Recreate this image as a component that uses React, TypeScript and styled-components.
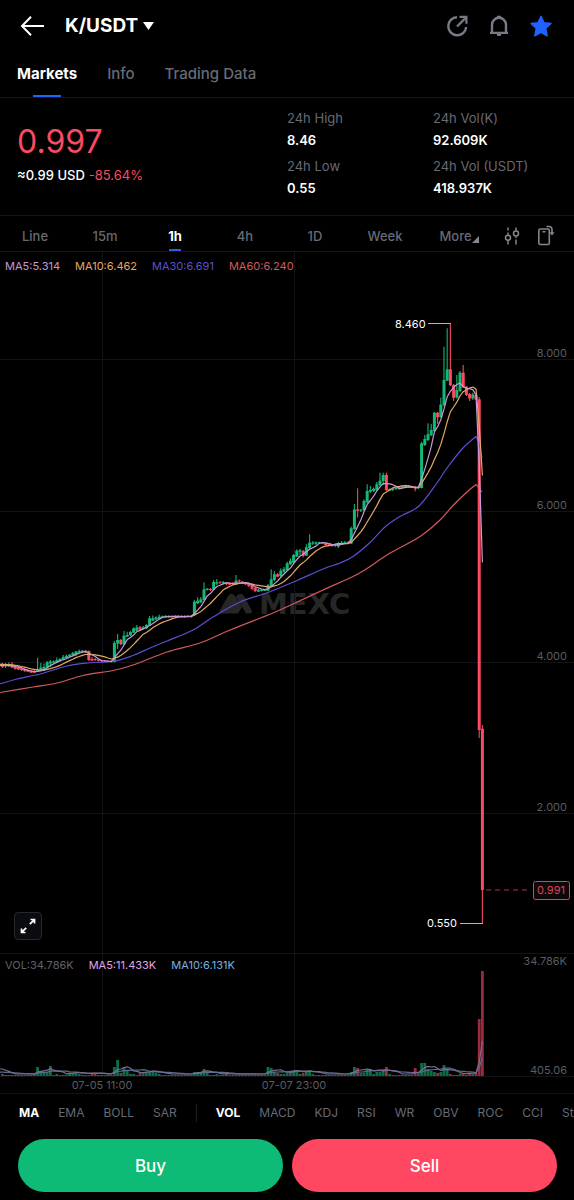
import React from "react";
import styled, { createGlobalStyle, css } from "styled-components";

const c = {
  up: "#14b877",
  down: "#fb4a62",
  blue: "#1f62ff",
  muted: "#676a75",
  line: "#15161b",
  ma5: "#c79ad6",
  ma10: "#e5a860",
  ma30: "#5a50d2",
  ma60: "#d15a5f",
};

const GlobalStyle = createGlobalStyle`
  *, *::before, *::after { box-sizing: border-box; }
  html, body { margin: 0; background: #000; }
  body { font-family: Inter, "Liberation Sans", sans-serif; color: #fff; }
  button { font: inherit; color: inherit; background: none; border: 0; padding: 0; cursor: pointer; }
`;

const Page = styled.main`
  display: flex;
  flex-direction: column;
  min-height: 100vh;
  overflow-x: hidden;
  background: #000;
`;

const TopBar = styled.header`
  display: flex;
  align-items: center;
  height: 52px;
  padding: 0 21px 0 20px;
`;

const IconButton = styled.button`
  display: flex;
  align-items: center;
  justify-content: center;
  width: 24px;
  height: 24px;
`;

const Pair = styled.button`
  display: flex;
  align-items: center;
  gap: 5px;
  margin-left: 21px;
  font-size: 19px;
  line-height: 24px;
  font-weight: 700;
`;

const Actions = styled.div`
  display: flex;
  gap: 18px;
  margin-left: auto;
`;

const Tabs = styled.nav`
  display: flex;
  gap: 30px;
  height: 46px;
  padding: 0 17px;
  border-bottom: 1px solid ${c.line};
`;

const Tab = styled.button<{ $active?: boolean }>`
  position: relative;
  padding-bottom: 2px;
  font-size: 15px;
  font-weight: ${(p) => (p.$active ? 700 : 500)};
  color: ${(p) => (p.$active ? "#fff" : c.muted)};
  ${(p) =>
    p.$active &&
    css`
      &::after {
        content: "";
        position: absolute;
        left: 50%;
        bottom: 0;
        width: 28px;
        height: 2px;
        margin-left: -14px;
        background: ${c.blue};
      }
    `}
`;

const Summary = styled.section`
  display: grid;
  grid-template-columns: 270fr 146fr 124fr;
  height: 118px;
  padding: 8px 17px 0;
  border-bottom: 1px solid ${c.line};
`;

const PriceBlock = styled.div`
  padding-top: 18px;
`;

const Price = styled.div`
  font-size: 32px;
  line-height: 36px;
  color: ${c.down};
`;

const PriceSub = styled.div`
  display: flex;
  gap: 4px;
  margin-top: 5px;
  font-size: 13px;
  line-height: 20px;
  font-weight: 500;
`;

const Change = styled.span`
  font-weight: 400;
  color: ${c.down};
`;

const StatList = styled.dl`
  margin: 0;
  font-size: 13px;
`;

const StatLabel = styled.dt`
  height: 24px;
  line-height: 24px;
  color: ${c.muted};
`;

const StatValue = styled.dd`
  height: 24px;
  margin: 0;
  line-height: 20px;
  font-weight: 600;
`;

const Intervals = styled.nav`
  display: flex;
  height: 36px;
  border-bottom: 1px solid ${c.line};
`;

const IntervalList = styled.div`
  flex: 1;
  display: grid;
  grid-template-columns: repeat(7, 1fr);
`;

const Interval = styled.button<{ $active?: boolean }>`
  position: relative;
  display: flex;
  align-items: center;
  justify-content: center;
  padding-top: 4px;
  font-size: 13px;
  font-weight: ${(p) => (p.$active ? 700 : 500)};
  color: ${(p) => (p.$active ? "#fff" : c.muted)};
  ${(p) =>
    p.$active &&
    css`
      &::after {
        content: "";
        position: absolute;
        left: 50%;
        bottom: 0;
        width: 12px;
        height: 2px;
        margin-left: -6px;
        background: #3a58d8;
      }
    `}
`;

const MoreIntervals = styled(Interval)`
  padding-left: 8px;
`;

const Tools = styled.div`
  display: flex;
  align-items: center;
  gap: 10px;
  padding: 4px 16px 0 10px;
`;

const ChartArea = styled.section`
  position: relative;
`;

const ChartSvg = styled.svg`
  display: block;
  width: 100%;
  height: auto;
  font-family: Inter, "Liberation Sans", sans-serif;
`;

const Legend = styled.div<{ $top: string }>`
  position: absolute;
  top: ${(p) => p.$top};
  left: 5px;
  display: flex;
  gap: 15px;
  font-size: 11px;
  line-height: 16px;
`;

const LegendItem = styled.span<{ $color: string }>`
  color: ${(p) => p.$color};
`;

const Expand = styled.button`
  position: absolute;
  left: 14px;
  bottom: 154px;
  display: flex;
  align-items: center;
  justify-content: center;
  width: 28px;
  height: 28px;
  background: #0a0b10;
  border: 1px solid #25262e;
  border-radius: 4px;
`;

const Indicators = styled.nav`
  display: flex;
  align-items: center;
  gap: 19px;
  height: 37px;
  padding-left: 19px;
  overflow-x: auto;
  scrollbar-width: none;
`;

const Indicator = styled.button<{ $active?: boolean }>`
  flex: none;
  font-size: 12px;
  font-weight: ${(p) => (p.$active ? 700 : 400)};
  color: ${(p) => (p.$active ? "#fff" : c.muted)};
`;

const Divider = styled.span`
  flex: none;
  width: 1px;
  height: 18px;
  background: #1d1e24;
`;

const TradeBar = styled.footer`
  display: grid;
  grid-template-columns: 1fr 1fr;
  gap: 9px;
  padding: 8px 17px 8px 18px;
`;

const TradeButton = styled.button<{ $color: string }>`
  height: 53px;
  border-radius: 27px;
  background: ${(p) => p.$color};
  font-size: 17px;
  font-weight: 500;
`;

/* Chart geometry. Vertical values are chart units, growing downwards. */
const W = 574;
const TOP = 252;
const BOTTOM = 1094;
const STEP = 3.2;
const VOL_BASE = 1076;
const xOf = (i: number) => 2.4 + STEP * i;

/* [direction, body top, body bottom, wick top, wick bottom, volume] */
type Candle = [0 | 1, number, number, number, number, number];
const flat = (n: number, y: number, dirs: string): Candle[] =>
  Array.from({ length: n }, (_, k) => {
    const up = dirs[k % dirs.length] === "u" ? 1 : 0;
    return [up, y - 0.5, y + 0.8, y - 1, y + 1.5, 1] as Candle;
  });

const candles: Candle[] = [
  [0, 663.7, 667, 663, 668, 2], [0, 664, 666, 663, 668, 1], [1, 664, 666, 662.5, 667, 1],
  [0, 664.5, 667.5, 662, 668, 1], [0, 667, 669, 666, 669.5, 1], [0, 668, 669.5, 666, 670, 1],
  [0, 668.3, 670, 667, 671, 1], [0, 669, 671, 668, 672, 1], [0, 670, 671.8, 669, 672, 1],
  [0, 670.5, 672.7, 670, 673, 1], [0, 671, 672.7, 670, 673, 2], [1, 669.5, 671.6, 657.7, 672, 9],
  [1, 667.5, 670.8, 663, 671, 5], [1, 667, 670, 663.5, 671, 4], [1, 662.3, 667.5, 661, 668, 4],
  [1, 661.5, 663.5, 660, 667, 10], [1, 661.3, 662.7, 660.5, 663, 1], [1, 660, 662.3, 657.5, 663, 2],
  [1, 659, 661, 658, 662, 1], [1, 657, 659.7, 655, 660, 1], [1, 656, 658, 654.5, 659, 1],
  [1, 654.7, 656.7, 654, 657, 3], [1, 653, 655.3, 652, 656, 3], [1, 651.5, 654.3, 651, 656, 3],
  [1, 651, 652.7, 649.5, 653, 2], [1, 650.7, 652, 650, 652.5, 1], [0, 650.7, 652, 650, 652.7, 1],
  [0, 651, 660, 650.5, 661, 1], [0, 659, 660.5, 657, 661, 3], [0, 659, 660, 658, 661, 2],
  [0, 659.7, 661, 659, 661.5, 1], [0, 660.3, 661.3, 660, 662, 1], [0, 660.7, 661.3, 660, 662, 1],
  [0, 661, 661.7, 660.5, 662, 1], [0, 661, 662, 660.5, 662.5, 1], [1, 643, 662, 641, 662.5, 9],
  [1, 640, 643.5, 634, 649, 16], [0, 640, 644.3, 639, 645, 3], [1, 635.7, 644.3, 631, 645, 8],
  [1, 635, 636.7, 631.7, 637, 5], [1, 632, 635.3, 631, 636, 2], [1, 628.3, 632.7, 627.5, 633, 2],
  [1, 627.5, 630.7, 625, 631, 1], [0, 627.3, 629.3, 626, 630, 3], [1, 627.3, 629, 626, 629.5, 4],
  [1, 625, 628.3, 624, 629, 4], [1, 618.3, 625.7, 616, 626, 4], [1, 618.3, 620.7, 615.5, 621, 4],
  [1, 617.3, 619.3, 616.5, 620, 3], [1, 616.7, 618.5, 614.5, 619, 2], [1, 616.3, 617.3, 615.5, 618, 1],
  ...flat(9, 616.3, "uddu"),
  [1, 601.7, 615.3, 600, 616, 4], [1, 600.7, 603.3, 597.3, 604, 4], [1, 599.3, 602.3, 597, 603, 3],
  [1, 589.3, 600, 582.3, 600.5, 7], [1, 588.7, 590, 588, 590.5, 3], [0, 589, 590, 588, 591, 1],
  [1, 582, 589.7, 580, 590, 1], [1, 582.3, 583.7, 579, 585, 2], [0, 582.3, 583, 581, 584, 1],
  [1, 582, 583, 581, 584, 1], [0, 582.7, 584, 582, 585, 2], [0, 583, 584.7, 582, 585, 1],
  [0, 583, 584.3, 582, 585, 1], [1, 580.7, 584, 575, 585, 1], [0, 580.3, 581.3, 579.5, 584, 1],
  [0, 581.7, 583.7, 581, 584, 1], [0, 582.3, 584.3, 582, 585, 1], [0, 583.3, 586, 583, 587, 1],
  [0, 584.3, 588.7, 584, 590, 1], [0, 588, 591, 587, 592, 1], [1, 589.7, 591.7, 589, 592, 1],
  [1, 589.7, 591, 589, 591.5, 1], [1, 589.3, 590.7, 589, 591, 1], [1, 585.3, 590.7, 584, 591, 9],
  [1, 579.3, 586.7, 569.3, 587, 8], [1, 574.3, 580, 571, 581, 4], [0, 574.3, 576.7, 573, 577, 3],
  [1, 570.7, 576, 568.3, 577, 2], [1, 569, 571.7, 567, 573, 2], [1, 563.3, 570, 561.7, 571, 3],
  [1, 560.7, 564.3, 558.3, 565, 4], [1, 555, 562.7, 554, 563, 5], [1, 550.7, 556.7, 549.3, 557, 5],
  [1, 550.3, 551.7, 549, 555, 2], [0, 551, 555.7, 550, 557.3, 3], [1, 547.3, 555.7, 544.3, 556, 4],
  [1, 542.7, 548.3, 534.3, 549, 6], [1, 542.5, 543.7, 541, 545, 2], [1, 542.3, 543.7, 541.5, 545, 1],
  [1, 542.3, 543.3, 541.7, 544, 1], [1, 542.5, 543.5, 542, 544, 1], [0, 543, 545, 542.7, 545.5, 1],
  [0, 544.3, 545.7, 544, 546.3, 1], [0, 544.7, 546, 544, 546.7, 1], [1, 544.7, 546, 544, 547, 1],
  [1, 543, 546.5, 542, 548, 1], [1, 542.7, 544.3, 541, 545, 1], [1, 542.3, 543.7, 541, 544, 1],
  [1, 542.3, 543.5, 541.5, 544, 1], [1, 528.3, 543.5, 526.7, 544, 4], [1, 509.5, 529, 504, 529.7, 9],
  [0, 509.3, 510.7, 488.3, 517.3, 8], [1, 509.7, 510.5, 509, 512, 3], [1, 501, 510.3, 499.3, 511, 3],
  [1, 491, 502.3, 484.3, 503, 7], [1, 490, 491.7, 486, 493, 6], [1, 488.7, 491, 487.5, 492, 2],
  [1, 484.3, 490, 482, 491, 4], [1, 480.7, 485, 472.7, 486, 4], [1, 475, 481, 472.7, 485, 5],
  [0, 475, 490, 472.7, 491, 9], [1, 489.3, 490.7, 488.5, 491, 2], [1, 488.7, 490, 488, 491, 1],
  [1, 488, 489, 486, 490, 1], [0, 486.7, 488, 486, 489, 1], [1, 486.3, 487.7, 485, 488, 1],
  [1, 486, 487.3, 484.7, 488, 1], [0, 486.3, 487.3, 485, 488, 1], [0, 486.7, 487.7, 486, 488, 1],
  [0, 487, 488.3, 486, 491.3, 8], [1, 487, 488, 486, 489, 2], [1, 443.3, 488, 441.7, 488.3, 13],
  [1, 439, 445, 435, 446, 13], [1, 434.3, 440, 423.3, 441, 7], [1, 430, 435.3, 424, 436, 5],
  [1, 412.7, 431, 412, 432, 4], [0, 412.7, 417.3, 412, 424, 3], [1, 404.7, 417, 397.7, 418, 4],
  [1, 380, 405.3, 346.7, 406, 11], [1, 369.3, 380.7, 328.3, 381, 6], [0, 369.3, 385.3, 323.3, 386, 2],
  [0, 385, 397.7, 384, 401, 1], [1, 390, 397.7, 375, 398.5, 1], [1, 372.7, 391, 371, 392, 2],
  [0, 372.7, 387.3, 365, 388, 2], [0, 386.7, 395, 386, 396, 1], [0, 394, 398.5, 393, 401, 2],
  [1, 394.3, 398.5, 392.7, 400, 2], [0, 395, 399.5, 394, 400, 3], [0, 399.3, 730, 397, 738, 57],
  [0, 728.7, 890, 725, 923.5, 105],
];

const close = (k: Candle) => (k[0] ? k[1] : k[2]);
const average = (values: number[], n: number, seed: number) =>
  values.map((_, i) => {
    let sum = 0;
    for (let j = i - n + 1; j <= i; j++) sum += j < 0 ? seed : values[j];
    return sum / n;
  });

const smooth = (pts: number[][]) =>
  pts.reduce((d, [x, y], i) => {
    if (!i) return `M${x} ${y}`;
    const p = pts[Math.max(0, i - 2)];
    const a = pts[i - 1];
    const n = pts[Math.min(pts.length - 1, i + 1)];
    return `${d}C${a[0] + (x - p[0]) / 6} ${a[1] + (y - p[1]) / 6} ${x - (n[0] - a[0]) / 6} ${y - (n[1] - a[1]) / 6} ${x} ${y}`;
  }, "");

const series = (ys: number[]) =>
  `M0 ${ys[0].toFixed(1)}L` + ys.map((y, i) => `${xOf(i).toFixed(1)} ${y.toFixed(1)}`).join("L");

const closes = candles.map(close);
const vols = candles.map((k) => k[5]);
const ma5 = series(average(closes, 5, 665));
const ma10 = series(average(closes, 10, 664));
const vol5 = series(average(vols, 5, 7).map((v) => VOL_BASE - 1 - v));
const vol10 = series(average(vols, 10, 3).map((v) => VOL_BASE - 1 - v));

const ma30 =
  smooth([
    [0, 684], [17, 679], [40, 674], [67, 666], [87, 663], [113, 661.5], [133, 655.5], [150, 648],
    [167, 641], [193, 630], [213, 617], [240, 602], [268, 592.5], [297, 580.5], [323, 569],
    [340, 563], [353, 556.5], [370, 542.5], [385, 527], [400, 516.5], [419, 506], [437, 483],
    [447, 468], [463, 448], [476, 436.5],
  ]) + "L479 443L482 458";
const ma60 =
  smooth([
    [0, 692.5], [33, 687], [57, 683], [83, 675.5], [113, 670.5], [133, 665], [167, 652],
    [200, 643], [230, 630], [273, 613], [293, 604], [323, 590], [353, 576.5], [367, 568.5],
    [387, 555], [420, 536.5], [440, 520], [453, 505.5], [467, 492], [476, 484.5],
  ]) + "L482 492";

const priceTicks = [
  { label: "8.000", y: 359 },
  { label: "6.000", y: 511 },
  { label: "4.000", y: 662 },
  { label: "2.000", y: 813 },
];

function PriceChart() {
  return (
    <ChartSvg viewBox={`0 ${TOP} ${W} ${BOTTOM - TOP}`} role="img" aria-label="K/USDT 1h chart">
      <g fill="#262626">
        <path d="M220 613.5Q218 613 220 610L228 596Q231 591.500 235 596L242 607L238 613.500Z" />
        <path d="M236 597Q240 590.500 244 596L251.500 610Q253 613 250 613.500H246Z" />
        <text x="259" y="614" fontFamily="DejaVu Sans" fontWeight="700" fontSize="29">
          MEXC
        </text>
      </g>
      <g stroke="#121317" shapeRendering="crispEdges">
        {priceTicks.map((t) => (
          <line key={t.label} x1="0" x2={W} y1={t.y} y2={t.y} />
        ))}
        <line x1="0" x2={W} y1="953" y2="953" />
        <line x1="0" x2={W} y1="1076" y2="1076" />
        <line x1="0" x2={W} y1="1093" y2="1093" />
        <line x1="102" x2="102" y1={TOP} y2={VOL_BASE} />
        <line x1="294" x2="294" y1={TOP} y2={VOL_BASE} />
      </g>

      {candles.map(([up, top, bottom, high, low, vol], i) => {
        const x = xOf(i);
        return (
          <g key={i} fill={up ? c.up : c.down}>
            <rect x={x - 0.6} y={high} width="1.2" height={low - high} opacity="0.9" />
            <rect x={x - 1.5} y={top} width="3" height={bottom - top} />
            <rect x={x - 1.4} y={VOL_BASE - vol} width="2.8" height={vol} opacity="0.6" />
          </g>
        );
      })}

      <g fill="none" strokeWidth="1.2" strokeLinejoin="round">
        <path d={ma60} stroke={c.ma60} />
        <path d={ma30} stroke={c.ma30} />
        <path d={ma10} stroke={c.ma10} />
        <path d={ma5} stroke={c.ma5} />
        <path d={vol10} stroke="#54708f" />
        <path d={vol5} stroke="#806a92" />
      </g>

      <g fontSize="11" fill="#fff">
        <text x="395" y="328">8.460</text>
        <text x="427" y="927">0.550</text>
      </g>
      <g stroke="#b5b5b5" shapeRendering="crispEdges">
        <line x1="428" x2="451" y1="323.5" y2="323.5" />
        <line x1="460" x2="483" y1="923.5" y2="923.5" />
      </g>

      <g fontSize="11" fill="#5a5c63" textAnchor="end">
        {priceTicks.map((t) => (
          <text key={t.label} x="567" y={t.y - 2}>
            {t.label}
          </text>
        ))}
        <text x="567" y="965">34.786K</text>
        <text x="567" y="1074">405.06</text>
      </g>
      <g fontSize="11" fill="#5a5c63" textAnchor="middle">
        <text x="102" y="1089">07-05 11:00</text>
        <text x="294" y="1089">07-07 23:00</text>
      </g>

      <line x1="486" x2="530" y1="890" y2="890" stroke="#a83347" strokeDasharray="5 4" />
      <rect x="533.5" y="881.5" width="36" height="18" rx="2" fill="#10070a" stroke="#d8465a" />
      <text x="551" y="894" fontSize="11" fill="#d8465a" textAnchor="middle">
        0.991
      </text>
    </ChartSvg>
  );
}

const intervals = ["Line", "15m", "1h", "4h", "1D", "Week"];
const mainIndicators = ["MA", "EMA", "BOLL", "SAR"];
const subIndicators = ["VOL", "MACD", "KDJ", "RSI", "WR", "OBV", "ROC", "CCI", "StochRSI"];

export default function App() {
  return (
    <Page>
      <GlobalStyle />
      <TopBar>
        <IconButton aria-label="Back">
          <svg width="24" height="24" viewBox="0 0 24 24" fill="none" stroke="#fff" strokeWidth="2">
            <path d="M24 12H2M11 2.800L2 12L11 21.200" />
          </svg>
        </IconButton>
        <Pair>
          K/USDT
          <svg width="11" height="8" viewBox="0 0 11 8" fill="#fff">
            <path d="M0 0H11L5.500 8Z" />
          </svg>
        </Pair>
        <Actions>
          <IconButton aria-label="Share">
            <svg width="24" height="24" viewBox="0 0 24 24" fill="none" stroke="#777b85" strokeWidth="2.4">
              <path d="M12 3.200A9 9 0 1 0 21.200 13M12 12.500L19.500 5" />
              <path d="M14.500 1.800H22.500V9.800H20.300V4H14.500Z" fill="#777b85" stroke="none" />
              <path d="M17 2.500H22V7.500Z" fill="#777b85" stroke="none" />
            </svg>
          </IconButton>
          <IconButton aria-label="Alerts">
            <svg width="24" height="24" viewBox="0 0 24 24" fill="none" stroke="#777b85" strokeWidth="2.4">
              <path d="M5 18.500V10.800A7 7 0 0 1 19 10.800V18.500M3 18.900H21" />
              <path d="M10 3.500V1.800H14V3.500ZM9.500 19.500H14.500L13.600 22H10.400Z" fill="#777b85" stroke="none" />
            </svg>
          </IconButton>
          <IconButton aria-label="Favourite">
            <svg width="24" height="24" viewBox="0 0 24 24" fill={c.blue} stroke={c.blue} strokeWidth="1.4" strokeLinejoin="round">
              <path d="M12 2.300L15 8.800L22 9.500L16.800 14.300L18.200 21.900L12 18.400L5.800 21.900L7.200 14.300L2 9.500L9 8.800Z" />
            </svg>
          </IconButton>
        </Actions>
      </TopBar>

      <Tabs>
        <Tab $active>Markets</Tab>
        <Tab>Info</Tab>
        <Tab>Trading Data</Tab>
      </Tabs>

      <Summary>
        <PriceBlock>
          <Price>0.997</Price>
          <PriceSub>
            <span>≈0.99 USD</span>
            <Change>-85.64%</Change>
          </PriceSub>
        </PriceBlock>
        <StatList>
          <StatLabel>24h High</StatLabel>
          <StatValue>8.46</StatValue>
          <StatLabel>24h Low</StatLabel>
          <StatValue>0.55</StatValue>
        </StatList>
        <StatList>
          <StatLabel>24h Vol(K)</StatLabel>
          <StatValue>92.609K</StatValue>
          <StatLabel>24h Vol (USDT)</StatLabel>
          <StatValue>418.937K</StatValue>
        </StatList>
      </Summary>

      <Intervals>
        <IntervalList>
          {intervals.map((name) => (
            <Interval key={name} $active={name === "1h"}>
              {name}
            </Interval>
          ))}
          <MoreIntervals>
            More
            <svg width="7" height="14" viewBox="0 0 7 14" fill="#85878f">
              <path d="M7 7V14H0Z" />
            </svg>
          </MoreIntervals>
        </IntervalList>
        <Tools>
          <IconButton aria-label="Chart settings">
            <svg width="24" height="24" viewBox="0 0 24 24" fill="none" stroke="#83858d" strokeWidth="1.5">
              <path d="M8 3.500V6.500M8 8.500V11.300M8 16.300V20.500M16 3.500V7M16 12.500V14M16 15.500V20.500" />
              <circle cx="8" cy="13.8" r="2.5" />
              <circle cx="16" cy="9.6" r="2.5" />
            </svg>
          </IconButton>
          <IconButton aria-label="Rotate screen">
            <svg width="24" height="24" viewBox="0 0 24 24" fill="none" stroke="#83858d" strokeWidth="1.6">
              <rect x="4.8" y="5" width="10.5" height="15.5" rx="1.5" />
              <path d="M8.500 7.800H11.500M12.500 2.500H15Q18 2.500 18 5.500V9.500" />
              <path d="M15.400 8.200H20.600L18 11.400Z" fill="#83858d" stroke="none" />
            </svg>
          </IconButton>
        </Tools>
      </Intervals>

      <ChartArea>
        <PriceChart />
        <Legend $top="6px">
          <LegendItem $color={c.ma5}>MA5:5.314</LegendItem>
          <LegendItem $color={c.ma10}>MA10:6.462</LegendItem>
          <LegendItem $color={c.ma30}>MA30:6.691</LegendItem>
          <LegendItem $color={c.ma60}>MA60:6.240</LegendItem>
        </Legend>
        <Expand aria-label="Full screen">
          <svg width="18" height="18" viewBox="0 0 18 18" fill="none" stroke="#fff" strokeWidth="1.7">
            <path d="M11.500 2.500H15.500V6.500M15.200 2.800L10.800 7.200M6.500 15.500H2.500V11.500M2.800 15.200L7.200 10.800" />
          </svg>
        </Expand>
        <Legend $top="calc(100% - 137px)">
          <LegendItem $color="#606269">VOL:34.786K</LegendItem>
          <LegendItem $color="#e3a5e6">MA5:11.433K</LegendItem>
          <LegendItem $color="#7ab0e0">MA10:6.131K</LegendItem>
        </Legend>
      </ChartArea>

      <Indicators>
        {mainIndicators.map((name) => (
          <Indicator key={name} $active={name === "MA"}>
            {name}
          </Indicator>
        ))}
        <Divider />
        {subIndicators.map((name) => (
          <Indicator key={name} $active={name === "VOL"}>
            {name}
          </Indicator>
        ))}
      </Indicators>

      <TradeBar>
        <TradeButton $color="#0dba76">Buy</TradeButton>
        <TradeButton $color="#ff4761">Sell</TradeButton>
      </TradeBar>
    </Page>
  );
}
